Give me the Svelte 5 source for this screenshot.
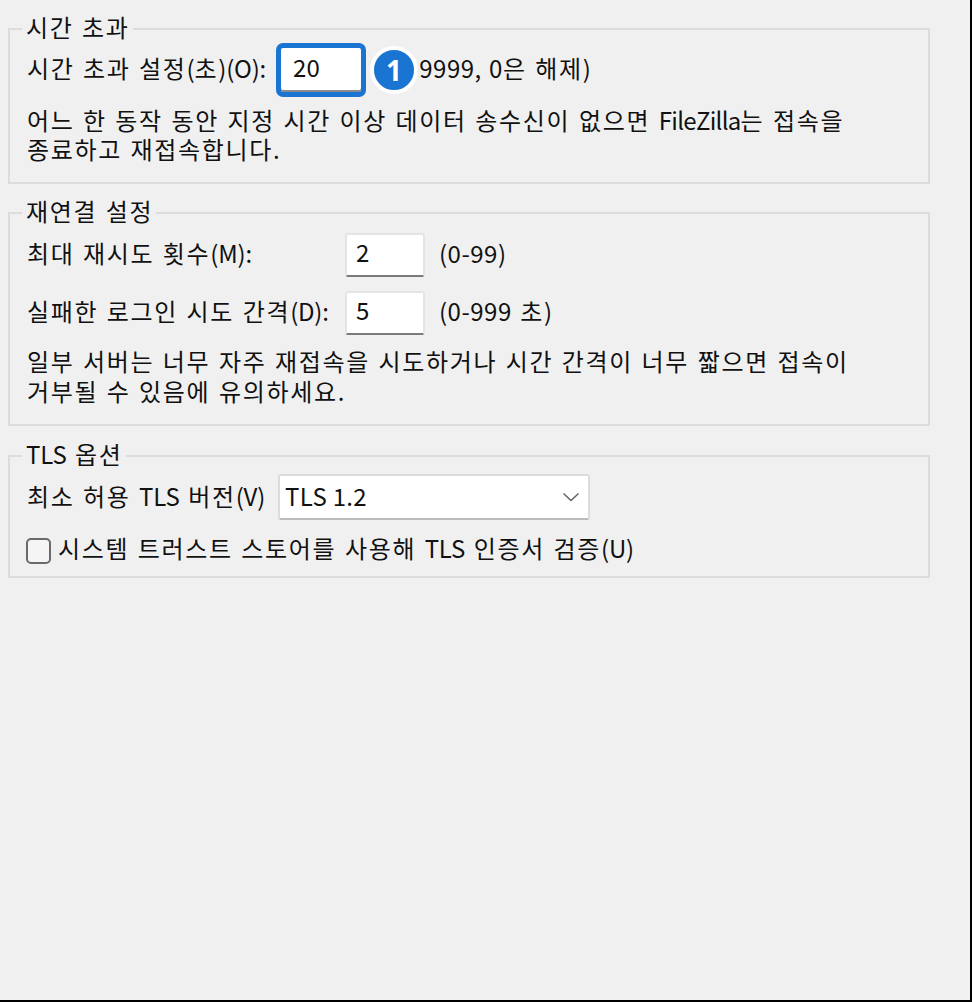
<script>
  let timeout = $state('20');
  let retries = $state('2');
  let delay = $state('5');
  let tlsVersion = $state('TLS 1.2');
  let useSystemStore = $state(false);
</script>

<div class="page">
  <fieldset class="group first">
    <legend>시간 초과</legend>
    <div class="row timeout-row">
      <label for="timeout">시간 초과 설정<span class="lat">(</span>초<span class="lat">)(O):</span></label>
      <input id="timeout" class="num focused" bind:value={timeout} />
      <span class="range"><span class="num-text">(1-9999, 0</span>은 해제<span class="num-text">)</span></span>
      <span class="badge">1</span>
    </div>
    <p>어느 한 동작 동안 지정 시간 이상 데이터 송수신이 없으면 <span class="product">FileZilla</span>는 접속을<br />종료하고 재접속합니다.</p>
  </fieldset>

  <fieldset class="group second">
    <legend>재연결 설정</legend>
    <div class="row retry-row">
      <label for="retries">최대 재시도 횟수<span class="lat">(M):</span></label>
      <input id="retries" class="num" bind:value={retries} />
      <span class="hint num-text">(0-99)</span>
    </div>
    <div class="row retry-row delay">
      <label for="delay">실패한 로그인 시도 간격<span class="lat">(D):</span></label>
      <input id="delay" class="num" bind:value={delay} />
      <span class="hint"><span class="num-text">(0-999</span> 초<span class="num-text">)</span></span>
    </div>
    <p>일부 서버는 너무 자주 재접속을 시도하거나 시간 간격이 너무 짧으면 접속이<br />거부될 수 있음에 유의하세요.</p>
  </fieldset>

  <fieldset class="group third">
    <legend><span class="lat">TLS</span> 옵션</legend>
    <div class="row tls-row">
      <span class="tls-label">최소 허용 <span class="lat">TLS</span> 버전<span class="lat">(V)</span></span>
      <div class="select">
        <span class="value">{tlsVersion}</span>
        <svg width="18" height="10" viewBox="0 0 18 10"><path d="M1.5 1.5 L9 8.5 L16.5 1.5" fill="none" stroke="#606060" stroke-width="1.4" /></svg>
      </div>
    </div>
    <label class="check">
      <input type="checkbox" bind:checked={useSystemStore} />
      <span class="box"></span>
      <span class="check-text">시스템 트러스트 스토어를 사용해 <span class="lat">TLS</span> 인증서 검증<span class="lat">(U)</span></span>
    </label>
  </fieldset>
</div>

<style>
  :global(body) {
    background: #000;
  }

  .page {
    box-sizing: border-box;
    width: 970px;
    height: 1000px;
    padding: 15px 40px 0 8px;
    background: #f0f0f0;
    font-family: "Noto Sans CJK KR", "Noto Sans", sans-serif;
    font-size: 24px;
    letter-spacing: 1.67px;
    word-spacing: 1.5px;
    line-height: 27px;
    color: #111;
    display: flex;
    flex-direction: column;
    overflow: hidden;
  }

  .lat {
    letter-spacing: -0.2px;
  }

  .num-text {
    letter-spacing: 0.5px;
  }

  .product {
    letter-spacing: -0.7px;
  }

  .group {
    box-sizing: border-box;
    margin: 0;
    padding: 0 0 0 17px;
    border: 2px solid #dcdcdc;
    min-width: 0;
  }

  .group legend {
    margin-left: -5px;
    padding: 0 3px 0 4px;
    height: 27px;
    line-height: 24px;
  }

  .first {
    height: 169px;
  }

  .second {
    margin-top: 15px;
    height: 227px;
  }

  .third {
    margin-top: 16px;
    height: 136px;
  }

  .row {
    display: flex;
    align-items: center;
  }

  .row label,
  .hint,
  .range {
    padding-bottom: 6px;
  }

  p {
    margin: 0;
    line-height: 30px;
    white-space: nowrap;
  }

  .timeout-row {
    position: relative;
    margin-top: 1px;
    height: 54px;
  }

  .timeout-row label {
    width: 249px;
    white-space: nowrap;
  }

  .first p {
    margin-top: 8px;
    line-height: 29px;
  }

  .num {
    box-sizing: border-box;
    width: 80px;
    height: 44px;
    padding: 0 0 8px 9px;
    border: 2px solid #e4e4e4;
    border-bottom: 2px solid #7a7a7a;
    border-radius: 3px;
    background: #fff;
    font: inherit;
    letter-spacing: 0.3px;
    color: #111;
    outline: none;
  }

  .focused {
    width: 90px;
    height: 54px;
    padding-left: 12px;
    border: 5px solid #1a74d2;
    border-radius: 7px;
    box-shadow: inset 0 -2px 0 #8a8a8a;
  }

  .range {
    margin-left: 22px;
    white-space: nowrap;
  }

  .badge {
    position: absolute;
    left: 343px;
    top: 3px;
    box-sizing: border-box;
    width: 48px;
    height: 48px;
    border: 4px solid #fff;
    border-radius: 50%;
    background: #1a74d2;
    color: #fff;
    font-family: "Noto Sans", sans-serif;
    font-size: 28px;
    font-weight: 700;
    line-height: 40px;
    letter-spacing: 0;
    text-align: center;
  }

  .retry-row {
    height: 44px;
    margin-top: 7px;
  }

  .retry-row label {
    width: 318px;
    white-space: nowrap;
  }

  .hint {
    margin-left: 14px;
  }

  .delay {
    margin-top: 14px;
  }

  .second p {
    margin-top: 11px;
  }

  .tls-row {
    height: 46px;
    margin-top: 5px;
  }

  .tls-label {
    width: 251px;
    white-space: nowrap;
    padding-bottom: 4px;
  }

  .select {
    box-sizing: border-box;
    width: 312px;
    height: 46px;
    padding: 0 8px 0 5px;
    display: flex;
    align-items: center;
    justify-content: space-between;
    background: #fff;
    border: 2px solid #dcdcdc;
    border-bottom-color: #bcbcbc;
    border-radius: 3px;
  }

  .value {
    letter-spacing: 0.3px;
    word-spacing: 0;
    padding-bottom: 4px;
  }

  .check {
    display: flex;
    align-items: center;
    gap: 7px;
    margin-top: 14px;
    position: relative;
    white-space: nowrap;
  }

  .check-text {
    padding-bottom: 6px;
  }

  .check input {
    position: absolute;
    opacity: 0;
    margin: 0;
  }

  .box {
    box-sizing: border-box;
    width: 25px;
    height: 26px;
    margin-left: -1px;
    border: 2px solid #6a6a6a;
    border-radius: 5px;
    background: #f5f5f5;
    flex: none;
  }
</style>
